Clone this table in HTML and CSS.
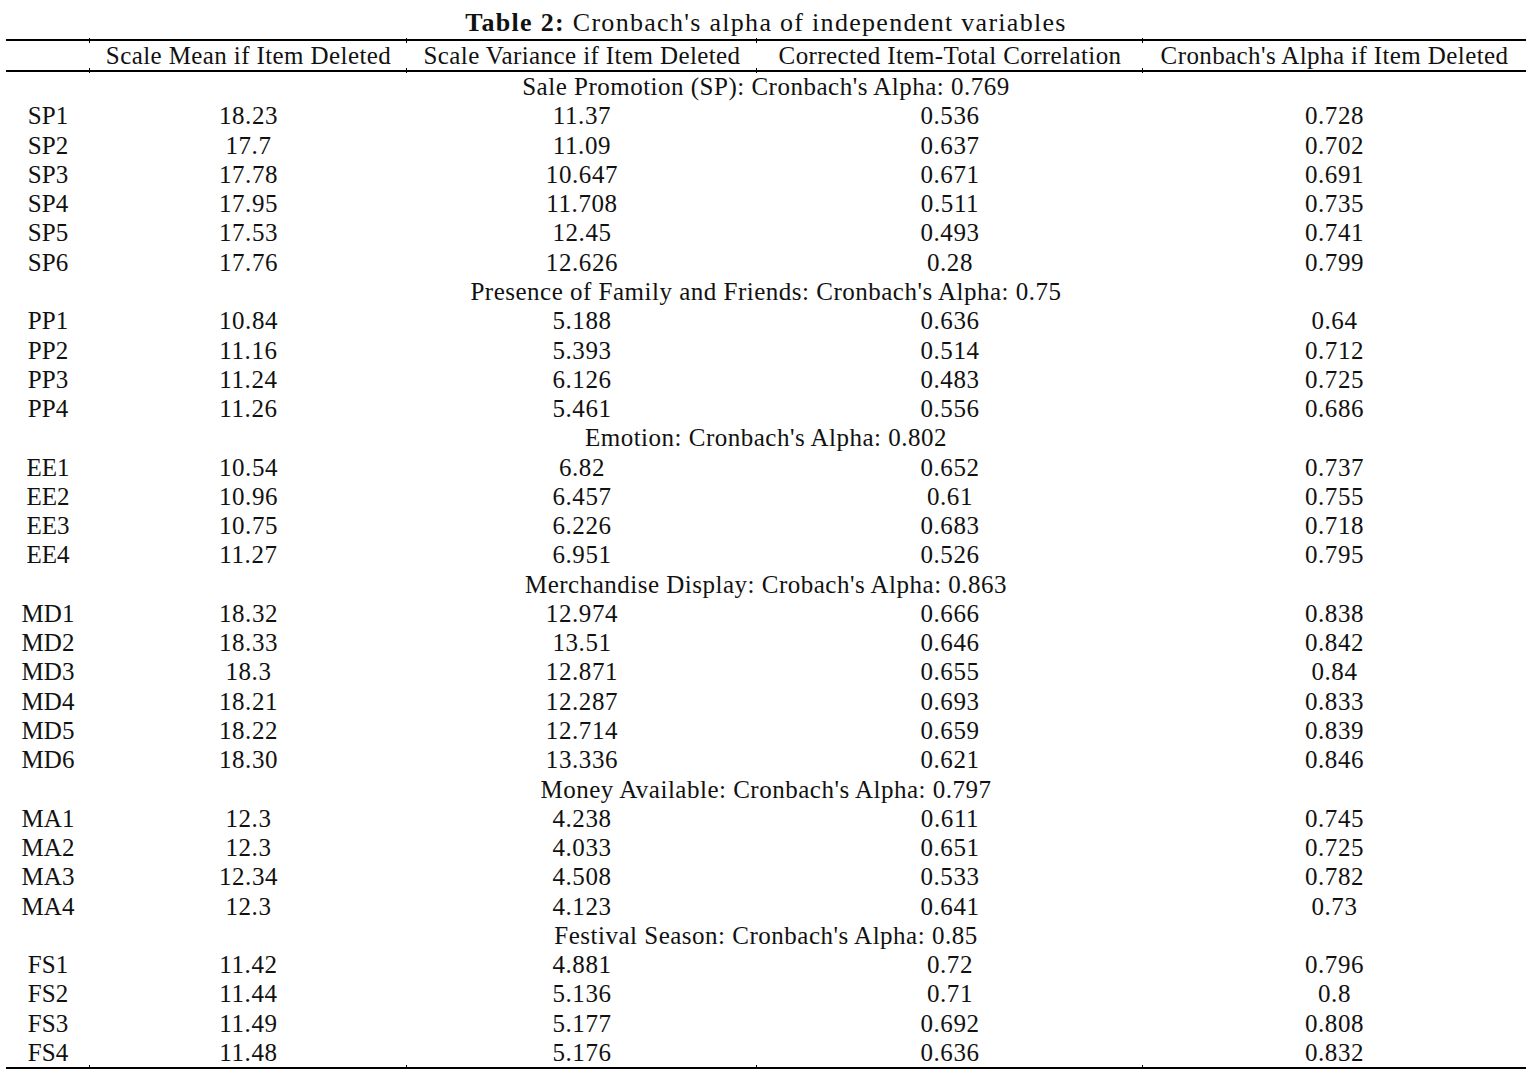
FILE: index.html
```html
<!DOCTYPE html>
<html lang="en">
<head>
<meta charset="utf-8">
<title>Table 2</title>
<link rel="stylesheet" href="styles.css">
</head>
<body>
<div class="page">
  <div class="caption"><b>Table 2:</b> Cronbach's alpha of independent variables</div>
  <table class="tbl">
    <colgroup>
      <col class="c0"><col class="c1"><col class="c2"><col class="c3"><col class="c4">
    </colgroup>
    <thead>
      <tr>
        <th></th>
        <th class="tk">Scale Mean if Item Deleted</th>
        <th class="tk">Scale Variance if Item Deleted</th>
        <th class="tk">Corrected Item-Total Correlation</th>
        <th class="tk">Cronbach's Alpha if Item Deleted</th>
      </tr>
    </thead>
    <tbody>
      <tr class="sec"><td colspan="5">Sale Promotion (SP): Cronbach's Alpha: 0.769</td></tr>
      <tr><td>SP1</td><td>18.23</td><td>11.37</td><td>0.536</td><td>0.728</td></tr>
      <tr><td>SP2</td><td>17.7</td><td>11.09</td><td>0.637</td><td>0.702</td></tr>
      <tr><td>SP3</td><td>17.78</td><td>10.647</td><td>0.671</td><td>0.691</td></tr>
      <tr><td>SP4</td><td>17.95</td><td>11.708</td><td>0.511</td><td>0.735</td></tr>
      <tr><td>SP5</td><td>17.53</td><td>12.45</td><td>0.493</td><td>0.741</td></tr>
      <tr><td>SP6</td><td>17.76</td><td>12.626</td><td>0.28</td><td>0.799</td></tr>
      <tr class="sec"><td colspan="5">Presence of Family and Friends: Cronbach's Alpha: 0.75</td></tr>
      <tr><td>PP1</td><td>10.84</td><td>5.188</td><td>0.636</td><td>0.64</td></tr>
      <tr><td>PP2</td><td>11.16</td><td>5.393</td><td>0.514</td><td>0.712</td></tr>
      <tr><td>PP3</td><td>11.24</td><td>6.126</td><td>0.483</td><td>0.725</td></tr>
      <tr><td>PP4</td><td>11.26</td><td>5.461</td><td>0.556</td><td>0.686</td></tr>
      <tr class="sec"><td colspan="5">Emotion: Cronbach's Alpha: 0.802</td></tr>
      <tr><td>EE1</td><td>10.54</td><td>6.82</td><td>0.652</td><td>0.737</td></tr>
      <tr><td>EE2</td><td>10.96</td><td>6.457</td><td>0.61</td><td>0.755</td></tr>
      <tr><td>EE3</td><td>10.75</td><td>6.226</td><td>0.683</td><td>0.718</td></tr>
      <tr><td>EE4</td><td>11.27</td><td>6.951</td><td>0.526</td><td>0.795</td></tr>
      <tr class="sec"><td colspan="5">Merchandise Display: Crobach's Alpha: 0.863</td></tr>
      <tr><td>MD1</td><td>18.32</td><td>12.974</td><td>0.666</td><td>0.838</td></tr>
      <tr><td>MD2</td><td>18.33</td><td>13.51</td><td>0.646</td><td>0.842</td></tr>
      <tr><td>MD3</td><td>18.3</td><td>12.871</td><td>0.655</td><td>0.84</td></tr>
      <tr><td>MD4</td><td>18.21</td><td>12.287</td><td>0.693</td><td>0.833</td></tr>
      <tr><td>MD5</td><td>18.22</td><td>12.714</td><td>0.659</td><td>0.839</td></tr>
      <tr><td>MD6</td><td>18.30</td><td>13.336</td><td>0.621</td><td>0.846</td></tr>
      <tr class="sec"><td colspan="5">Money Available: Cronbach's Alpha: 0.797</td></tr>
      <tr><td>MA1</td><td>12.3</td><td>4.238</td><td>0.611</td><td>0.745</td></tr>
      <tr><td>MA2</td><td>12.3</td><td>4.033</td><td>0.651</td><td>0.725</td></tr>
      <tr><td>MA3</td><td>12.34</td><td>4.508</td><td>0.533</td><td>0.782</td></tr>
      <tr><td>MA4</td><td>12.3</td><td>4.123</td><td>0.641</td><td>0.73</td></tr>
      <tr class="sec"><td colspan="5">Festival Season: Cronbach's Alpha: 0.85</td></tr>
      <tr><td>FS1</td><td>11.42</td><td>4.881</td><td>0.72</td><td>0.796</td></tr>
      <tr><td>FS2</td><td>11.44</td><td>5.136</td><td>0.71</td><td>0.8</td></tr>
      <tr><td>FS3</td><td>11.49</td><td>5.177</td><td>0.692</td><td>0.808</td></tr>
      <tr class="last"><td>FS4</td><td class="tk">11.48</td><td class="tk">5.176</td><td class="tk">0.636</td><td class="tk">0.832</td></tr>
    </tbody>
  </table>
</div>
</body>
</html>
```

FILE: styles.css
```css
html, body {
  margin: 0;
  padding: 0;
  background: #ffffff;
}

body {
  font-family: "Liberation Serif", "DejaVu Serif", serif;
  color: #111111;
  font-size: 25px;
}

.page {
  width: 1520px;
  padding: 0 0 0 6px;
}

.caption {
  height: 39px;
  line-height: 46px;
  font-size: 26px;
  text-align: center;
  white-space: nowrap;
  letter-spacing: 1.3px;
}

.caption b {
  font-weight: bold;
}

.tbl {
  width: 1520px;
  border-collapse: collapse;
  table-layout: fixed;
}

.c0 { width: 84px; }
.c1 { width: 317px; }
.c2 { width: 350px; }
.c3 { width: 386px; }
.c4 { width: 383px; }

.tbl th {
  font-weight: normal;
  height: 27px;
  padding: 1px 0 0;
  line-height: 28px;
  text-align: center;
  white-space: nowrap;
  letter-spacing: 0.4px;
  border-top: 2px solid #000;
  border-bottom: 2px solid #000;
  position: relative;
}

.tbl td {
  height: 28.27px;
  padding: 1px 0 0;
  line-height: 28px;
  text-align: center;
  white-space: nowrap;
  letter-spacing: 0.6px;
}

.tbl td:first-child {
  letter-spacing: 0;
}

.tbl tr.sec td {
  letter-spacing: 0.5px;
}

.tbl tr.last td {
  border-bottom: 2px solid #000;
  position: relative;
}

.tk::before,
.tk::after {
  content: "";
  position: absolute;
  left: -1px;
  width: 1px;
  height: 5px;
  background: #000;
}

th.tk::before {
  top: -3px;
}

th.tk::after {
  bottom: -3px;
}

td.tk::before {
  display: none;
}

td.tk::after {
  bottom: -3px;
}
```
